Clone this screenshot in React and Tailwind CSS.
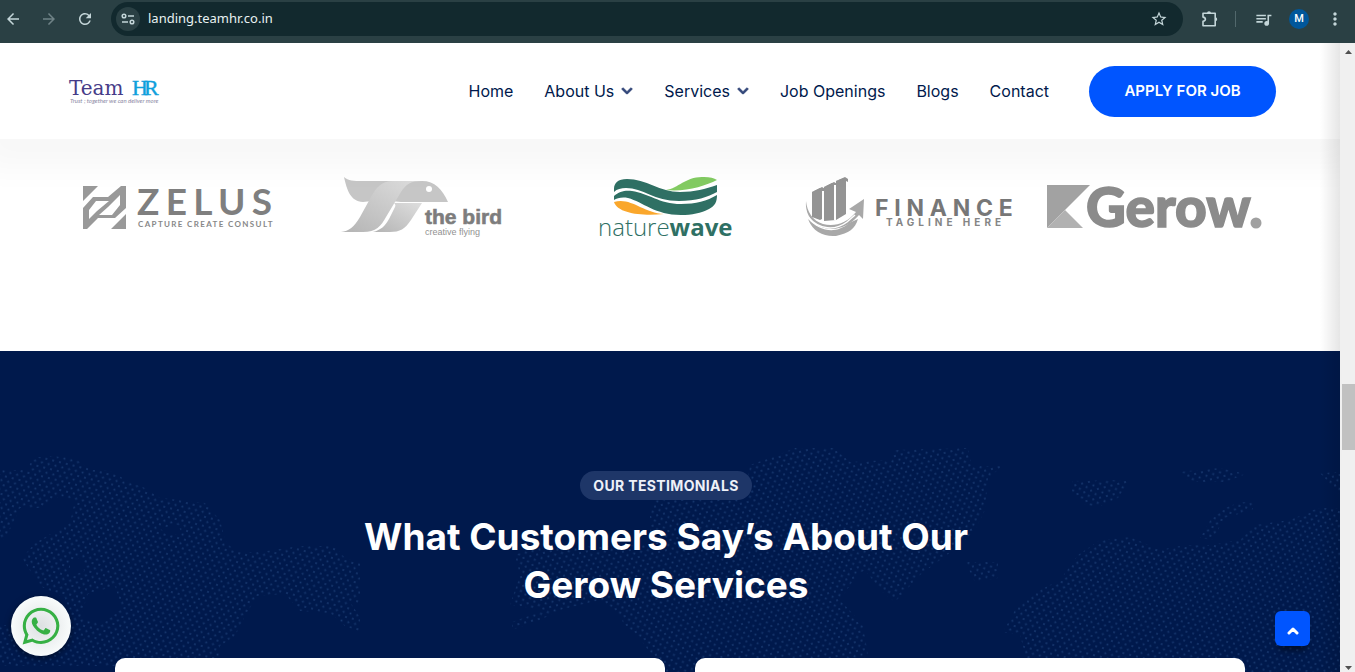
import React from "react";
import { MdArrowBack, MdArrowForward, MdRefresh, MdStarOutline, MdQueueMusic, MdMoreVert } from "react-icons/md";
import { FaChevronDown, FaWhatsapp } from "react-icons/fa";

const links = [
  { label: "Home" },
  { label: "About Us", menu: true },
  { label: "Services", menu: true },
  { label: "Job Openings" },
  { label: "Blogs" },
  { label: "Contact" },
];

function BrowserBar() {
  return (
    <div className="flex h-[43px] shrink-0 items-start bg-[#2a4044] pt-0.5 pr-[10px] text-[#c4d6d9]">
      <div className="flex h-[34px] w-[111px] shrink-0 items-center gap-[18px] pl-[4px]">
        <button aria-label="Back"><MdArrowBack size={18} /></button>
        <button aria-label="Forward" className="text-[#6f8286]"><MdArrowForward size={18} /></button>
        <button aria-label="Reload"><MdRefresh size={18} /></button>
      </div>
      <div className="flex h-[34px] min-w-0 flex-1 items-center rounded-full bg-[#12292e] pr-[15px] pl-[5px]">
        <button aria-label="Site information" className="mr-2 flex size-6 items-center justify-center rounded-full bg-[#2a4044]">
          <svg width="14" height="12" viewBox="0 0 14 12" fill="none" stroke="currentColor" strokeWidth="1.5">
            <circle cx="3" cy="3" r="1.8" />
            <path d="M7 3h6M1 9h6" />
            <circle cx="11" cy="9" r="1.8" />
          </svg>
        </button>
        <input
          aria-label="Address"
          defaultValue="landing.teamhr.co.in"
          className="min-w-0 flex-1 bg-transparent font-['Noto_Sans',sans-serif] text-[13px] text-[#e8f1f2] outline-none"
        />
        <button aria-label="Bookmark this page"><MdStarOutline size={18} /></button>
      </div>
      <div className="flex h-[34px] shrink-0 items-center pl-[18px]">
        <button aria-label="Extensions">
          <svg width="18" height="18" viewBox="0 0 18 18" fill="none" stroke="currentColor" strokeWidth="1.6">
            <path d="M2 3.2h12.200v12.500H2v-4.400c1.400-.2 2.400-1 2.400-2S3.400 7.300 2 7.100z" strokeLinejoin="round" />
            <path d="M6 3.200a2 2 0 0 1 4 0zM14.200 7.300a2 2 0 0 1 0 4z" fill="currentColor" stroke="none" />
          </svg>
        </button>
        <span className="ml-4 h-4 w-px bg-[#52686c]" />
        <button aria-label="Media controls" className="ml-[18px]"><MdQueueMusic size={19} /></button>
        <button aria-label="Profile" className="ml-4 flex size-5 items-center justify-center rounded-full bg-[#01579b] font-[Roboto,sans-serif] text-[11px] font-medium text-white">M</button>
        <button aria-label="Menu" className="ml-4"><MdMoreVert size={20} /></button>
      </div>
    </div>
  );
}

function TeamLogo() {
  return (
    <svg className="overflow-visible" width="92" height="30" viewBox="0 0 92 30">
      <text x="1" y="19" fontFamily="DejaVu Serif, serif" fontSize="20" fill="#463c88">Team</text>
      <text y="19" fontFamily="Liberation Serif, serif" fontSize="22" fill="#0fa0dc" stroke="#0fa0dc" strokeWidth="0.4">
        <tspan x="64">H</tspan>
        <tspan x="76">R</tspan>
      </text>
      <text x="2" y="27" fontFamily="Lato, sans-serif" fontStyle="italic" fontSize="6" fill="#8a87a3">Trust ; together we can deliver more</text>
    </svg>
  );
}

function Header() {
  return (
    <header className="relative z-10 flex h-24 shrink-0 items-center bg-white pr-16 pl-[68px] shadow-[0_10px_30px_20px_rgba(25,25,25,0.03)]">
      <a href="#home" aria-label="Team HR"><TeamLogo /></a>
      <nav className="mr-10 ml-auto flex items-center gap-[31px] text-base text-[#00194c]">
        {links.map((l) => (
          <a key={l.label} href="#nav" className="flex items-center gap-[7px] whitespace-nowrap">
            {l.label}
            {l.menu && <FaChevronDown size={12} strokeWidth={40} stroke="currentColor" className="text-[#33477a]" />}
          </a>
        ))}
      </nav>
      <a href="#apply" className="flex h-[51px] w-[187px] shrink-0 items-center justify-center rounded-full bg-[#0055ff] text-[15px] font-semibold text-white">
        APPLY FOR JOB
      </a>
    </header>
  );
}

function Zelus() {
  return (
    <svg className="overflow-visible" width="192" height="64" viewBox="0 0 192 64">
      <g fill="#999">
        <path d="M1 10h15L1 25zM44 53H29l15-15z" />
        <path fillRule="evenodd" d="M1 53V32l10-11h15L39 10h5v22L33 42H16L5 53zM7 34v9l8-8 12-10H14zM38 19 26 31l-9 8h13l8-10z" />
      </g>
      <text x="55" y="39" className="tracking-[0.17em]" fontFamily="Lato, sans-serif" fontSize="37" fontWeight="700" fill="#7f7f7f">ZELUS</text>
      <text x="56" y="51" className="tracking-[0.17em]" fontFamily="Lato, sans-serif" fontSize="8" fontWeight="700" fill="#888">CAPTURE CREATE CONSULT</text>
    </svg>
  );
}

function Bird() {
  return (
    <svg className="overflow-visible" width="162" height="64" viewBox="0 0 162 64">
      <defs>
        <linearGradient id="wing" x1="1" y1="0" x2="0" y2="1">
          <stop offset="0" stopColor="#dedede" />
          <stop offset="1" stopColor="#b4b4b4" />
        </linearGradient>
      </defs>
      <path d="M3 1c4 4 10 4 18 4h60c13 0 20 8 26 21H60L40 24l-18 2C9 25 6 14 3 1z" fill="#c6c6c6" />
      <path d="M81 5H52c-12 0-17 7-22 16L19 41C13 51 8 55 0 56h22c13 0 18-6 23-15L60 16c5-8 10-11 21-11z" fill="url(#wing)" />
      <path d="M53 27h28L70 44c-6 9-11 12-21 12H32c8-2 12-6 16-13l6-12c1-2 0-3-1-4z" fill="url(#wing)" />
      <circle cx="88" cy="13" r="3" fill="#fff" />
      <text x="84" y="48" fontFamily="Liberation Sans, sans-serif" fontSize="21" fontWeight="700" fill="#7d7d7d" stroke="#7d7d7d" strokeWidth="0.600">the bird</text>
      <text x="84" y="59" fontFamily="Liberation Sans, sans-serif" fontSize="9" fill="#929292">creative flying</text>
    </svg>
  );
}

function NatureWave() {
  return (
    <svg className="overflow-visible" width="136" height="66" viewBox="0 0 136 66">
      <g fill="#2f7064">
        <path d="M16 13c0-6 4-10 13-10 19 0 33 13 53 13 15 0 25-3 37-7v7c-9 5-21 9-38 9-25 0-36-13-53-13-5 0-9 1-12 4z" />
        <path d="M16 24v-4c5-5 12-6 18-5 16 2 27 13 49 13 15 0 26-3 36-9 0 7-2 11-8 14-8 4-17 6-28 6-26 0-38-13-53-17-6-1-11 0-14 2z" />
      </g>
      <path d="M68 14C81 12 88 0 106 1c6 0 10 1 13 3-12 6-31 12-51 10z" fill="#83cb62" />
      <path d="M16 26c17-5 29 11 50 12-21 2-46 0-50-12z" fill="#faa72c" />
      <text x="0" y="60" fontSize="24" fill="#2f7064" fontFamily="Open Sans, sans-serif">
        <tspan fontWeight="300">nature</tspan>
        <tspan fontWeight="700">wave</tspan>
      </text>
    </svg>
  );
}

function Finance() {
  return (
    <svg className="overflow-visible" width="208" height="64" viewBox="0 0 208 64">
      <g fill="#949494">
        <path d="M6 16l8-4 4 2v28l-4 2-8-3zM18 11l8-4 4 2v35l-12 1zM30 5l8-3 3 2h-1v34l-10 6z" />
        <path d="M6 16l10-5 5 3-2 2-4-2zM18 11l10-5 5 3-2 2-4-2zM30 5l9-4 3 2v3l-4-2z" />
      </g>
      <path d="M17 15v29M29 9v35" stroke="#fff" strokeWidth="2" />
      <g fill="#a8a8a8">
        <path d="M0 25c1 11 7 20 17 23 12 3 24-1 33-12l-7-3 15-10-1 20-4-4C41 53 26 56 13 50 4 45-1 36 0 25z" />
        <path d="M2 43c12 13 29 15 41 4l9-4c-3 10-9 14-22 17-12 1-23-4-28-17z" />
      </g>
      <path d="M2 41c11 13 27 14 39 5l8-7" fill="none" stroke="#fff" strokeWidth="1.500" />
      <text x="69" y="40" className="tracking-[0.25em]" fontFamily="Inter, sans-serif" fontSize="23" fontWeight="700" fill="#777">FINANCE</text>
      <text x="80" y="50" className="tracking-[0.4em]" fontFamily="Inter, sans-serif" fontSize="10" fontWeight="700" fill="#858585">TAGLINE HERE</text>
    </svg>
  );
}

function Gerow() {
  return (
    <svg className="overflow-visible" width="216" height="64" viewBox="0 0 216 64">
      <path d="M1 9h43L19 34 1 52z" fill="#a2a2a2" />
      <path d="M1 52l18-18 18 18z" fill="#b1b1b1" />
      <text x="40" y="51" fontFamily="Lato, sans-serif" fontSize="55" fontWeight="900" fill="#8b8b8b" stroke="#8b8b8b" strokeWidth="1.500">Gerow</text>
      <circle cx="210" cy="47" r="5.500" fill="#a0a0a0" />
    </svg>
  );
}

function DottedMap() {
  return (
    <svg className="absolute inset-x-0 top-0 h-[321px] w-full" viewBox="0 351 1340 321" preserveAspectRatio="xMidYMid slice" aria-hidden="true">
      <defs>
        <pattern id="dotsA" width="7" height="9" patternUnits="userSpaceOnUse" patternTransform="rotate(14)">
          <circle cx="2" cy="2" r="1" fill="#17386f" />
          <circle cx="5.500" cy="6.500" r="1" fill="#17386f" />
        </pattern>
        <pattern id="dotsB" width="7" height="9" patternUnits="userSpaceOnUse" patternTransform="rotate(-14)">
          <circle cx="2" cy="2" r="1" fill="#17386f" />
          <circle cx="5.500" cy="6.500" r="1" fill="#17386f" />
        </pattern>
      </defs>
      <g fill="url(#dotsA)">
        <path fillRule="evenodd" d="M0 470h28l4-12 18-2 25 2 15 12h18l22 12 15 6 15 10 20 2 25 3 15 17 5 20 10 12h25l40-6h35l10 12 15 4v43l-10-3 10 15v15l-15-6-15-13-30-2-15-17-28 2-12 20-10 20-15 10v20H0v-40l60-10 5-18-25-12-18-28 13-15 35-20 5-23-15-4-20 12H20L5 540H0zM88 594l27-8 7 22-20 16-22-6zM70 562l12-5 2 14-14 6zM160 528l18-3 4 8-14 3z" />
        <path d="M1078 555l22-15 30-3 30 13 25-5h25l30-5 15-15 35-5 28-12h22v164h-310l-10-37-17-3 12-22 25-20 20-10zM1200 538l15-26 25-10 16 1-4 7-27 8-13 22z" />
      </g>
      <g fill="url(#dotsB)">
        <path d="M650 510l5-10h90l5-35 20-7 25-10h40l15 14 40-2 5-10 73-2 4 18h31l-15 12-3 32-10 20-15 15-20 15-20 15-25 27-15-12-15-20-8 5-17 25 23 25 5 30-23 17H660l-15-27-20-20-10-15-15-10-40 10-20 10-28 10v-8l33-12-35-5 10-30-5-20 15-7 120-3z" />
        <path d="M965 562h33v16l-23 4zM1072 481l58-1-12 18-20 9-13-2-13-12zM1178 472l42-4 26 6-21 8h-35zM1320 473l20-1v23z" />
      </g>
    </svg>
  );
}

function Testimonials() {
  return (
    <section className="relative flex-1 bg-[#00194c] pt-[120px]">
      <DottedMap />
      <div className="relative flex flex-col items-center pr-16 pl-14 text-center text-white">
        <span className="flex h-[29px] items-center rounded-full bg-[#1e3668] px-[13px] text-sm font-bold tracking-wide text-[#eef1f8]">
          OUR TESTIMONIALS
        </span>
        <h2 className="mt-[13px] max-w-[640px] text-[37px] leading-[48px] font-bold">
          What Customers Say’s About Our Gerow Services
        </h2>
      </div>
      <div className="relative mt-[49px] grid grid-cols-2 gap-[30px] pr-[95px] pl-[115px]">
        <article className="h-60 rounded-[10px] bg-white" />
        <article className="h-60 rounded-[10px] bg-white" />
      </div>
    </section>
  );
}

function Scrollbar() {
  return (
    <div className="flex w-[15px] shrink-0 flex-col items-end bg-[#f0f0f0]" aria-hidden="true">
      <svg width="13" height="17" viewBox="0 0 13 17"><path d="M3 11l3.500-4 3.500 4z" fill="#505050" /></svg>
      <div className="grow-[324]" />
      <div className="h-[66px] w-[13px] bg-[#c1c1c1]" />
      <div className="grow-[205]" />
      <svg width="13" height="17" viewBox="0 0 13 17"><path d="M3 11l3.500 4 3.500-4z" fill="#505050" /></svg>
    </div>
  );
}

export default function App() {
  return (
    <div className="flex h-screen flex-col overflow-hidden font-[Inter,sans-serif]">
      <BrowserBar />
      <div className="flex min-h-0 flex-1">
        <main className="relative flex min-w-0 flex-1 flex-col overflow-hidden bg-white">
          <Header />
          <section className="grid h-[212px] shrink-0 grid-cols-5 items-start justify-items-center pt-[37px] pr-16 pl-14">
            <Zelus />
            <Bird />
            <NatureWave />
            <Finance />
            <Gerow />
          </section>
          <Testimonials />
          <div className="pointer-events-none absolute inset-y-0 right-0 z-20 w-5 bg-linear-to-l from-black/10 to-transparent" />
          <a
            href="#whatsapp"
            aria-label="Chat on WhatsApp"
            className="absolute bottom-4 left-[11px] z-20 flex size-[60px] items-center justify-center rounded-full bg-radial from-[#dde0e2] to-[#f8fbfb] to-70% text-[#36b044] shadow-[0_2px_6px_rgba(0,0,0,0.5)]"
          >
            <FaWhatsapp size={42} />
          </a>
          <button
            aria-label="Back to top"
            className="absolute right-[30px] bottom-[26px] z-20 flex size-[35px] items-center justify-center rounded-md bg-[#0055ff] text-white shadow-[0_8px_6px_-4px_rgba(0,0,0,0.5)]"
          >
            <svg width="12" height="8" viewBox="0 0 12 8" className="mt-1"><path d="M2 6l4-4 4 4" fill="none" stroke="currentColor" strokeWidth="3" strokeLinecap="round" strokeLinejoin="round" /></svg>
          </button>
        </main>
        <Scrollbar />
      </div>
    </div>
  );
}
